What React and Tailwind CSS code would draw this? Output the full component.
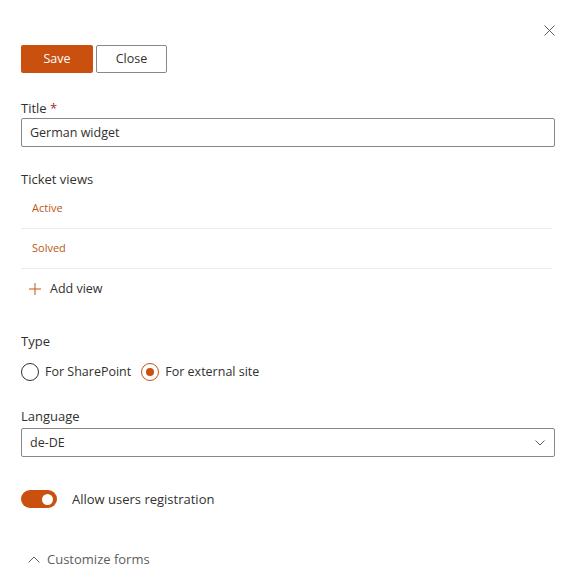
import React, { useState } from "react";

const font = { fontFamily: '"Open Sans", "Noto Sans", sans-serif' };

const App = () => {
  const [type, setType] = useState("external");
  const [allowReg, setAllowReg] = useState(true);
  const views = ["Active", "Solved"];

  return (
    <div
      className="w-[565px] h-[588px] bg-white pl-[21px] pr-[10px] text-[12.5px] text-[#323130] overflow-hidden"
      style={font}
    >
      {/* header */}
      <div className="h-[45px] flex items-start justify-end pt-[25px]">
        <svg width="11" height="11" viewBox="0 0 11 11" className="text-[#605e5c]">
          <path d="M0.5 0.5L10.5 10.5M10.5 0.5L0.5 10.5" stroke="currentColor" strokeWidth="1" />
        </svg>
      </div>

      <div className="flex gap-[3px]">
        <button className="w-[72px] h-[28px] pt-px bg-[#ca5010] text-white rounded-[2px] text-[12.5px]">
          Save
        </button>
        <button className="w-[71px] h-[28px] pt-px border border-[#8a8886] bg-white rounded-[2px] text-[12.5px]">
          Close
        </button>
      </div>

      {/* title */}
      <div className="mt-[25px] h-[20px] leading-[20px] text-[13px] font-medium">
        Title <span className="text-[#a4262c]">*</span>
      </div>
      <div className="h-[29px] border border-[#8a8886] rounded-[2px] flex items-center px-[8px] pt-px">
        German widget
      </div>

      {/* ticket views */}
      <div className="mt-[22px] h-[20px] leading-[20px] text-[13px] font-medium">Ticket views</div>
      <div className="pr-[3px]">
        {views.map((v) => (
          <div
            key={v}
            className="h-[40px] border-b border-[#edebe9] flex items-center pl-[11px] text-[11px] text-[#b95816]"
          >
            {v}
          </div>
        ))}
        <div className="h-[40px] flex items-center pl-[8px] gap-[9px]">
          <svg width="12" height="12" viewBox="0 0 12 12" className="text-[#ca5010]">
            <path d="M6 0V12M0 6H12" stroke="currentColor" strokeWidth="1" />
          </svg>
          Add view
        </div>
      </div>

      {/* type */}
      <div className="mt-[22px] h-[20px] leading-[20px] text-[13px] font-medium">Type</div>
      <div className="mt-[11px] flex items-center h-[20px]">
        <label className="flex items-center gap-[6px] mr-[10px]" onClick={() => setType("sp")}>
          <span
            className={`w-[18px] h-[18px] rounded-full border flex items-center justify-center ${
              type === "sp" ? "border-[#ca5010]" : "border-[#323130]"
            }`}
          >
            {type === "sp" && <span className="w-[8px] h-[8px] rounded-full bg-[#ca5010]" />}
          </span>
          For SharePoint
        </label>
        <label className="flex items-center gap-[6px]" onClick={() => setType("external")}>
          <span
            className={`w-[18px] h-[18px] rounded-full border flex items-center justify-center ${
              type === "external" ? "border-[#ca5010]" : "border-[#323130]"
            }`}
          >
            {type === "external" && <span className="w-[8px] h-[8px] rounded-full bg-[#ca5010]" />}
          </span>
          For external site
        </label>
      </div>

      {/* language */}
      <div className="mt-[24px] h-[20px] leading-[20px] text-[13px] font-medium">Language</div>
      <div className="mt-[2px] h-[29px] border border-[#8a8886] rounded-[2px] flex items-center justify-between pl-[8px] pr-[9px] pt-px">
        de-DE
        <svg width="10" height="6" viewBox="0 0 10 6" className="text-[#605e5c]">
          <path d="M0.5 0.5L5 5L9.5 0.5" stroke="currentColor" strokeWidth="1" fill="none" />
        </svg>
      </div>

      {/* toggle */}
      <div className="mt-[33px] flex items-center gap-[15px] h-[18px]">
        <button
          onClick={() => setAllowReg(!allowReg)}
          className={`w-[36px] h-[18px] rounded-full flex items-center px-[4px] ${
            allowReg ? "bg-[#ca5010] justify-end" : "bg-white border border-[#323130] justify-start"
          }`}
        >
          <span className={`w-[11px] h-[11px] rounded-full ${allowReg ? "bg-white" : "bg-[#323130]"}`} />
        </button>
        <span className="text-[13px] font-medium pt-px">Allow users registration</span>
      </div>

      {/* customize forms */}
      <div className="mt-[42px] flex items-center gap-[7px] pl-[7px] text-[#605e5c] text-[13px]">
        <svg width="12" height="7" viewBox="0 0 12 7">
          <path d="M0.5 6.5L6 1L11.5 6.5" stroke="currentColor" strokeWidth="1" fill="none" />
        </svg>
        Customize forms
      </div>
    </div>
  );
};

export default App;
